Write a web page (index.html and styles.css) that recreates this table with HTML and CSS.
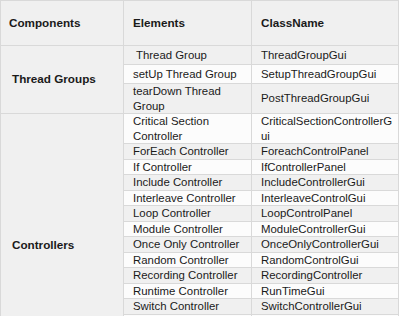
FILE: index.html
```html
<!DOCTYPE html>
<html>
<head>
<meta charset="utf-8">
<link rel="stylesheet" href="styles.css">
</head>
<body>
<table class="grid">
  <colgroup>
    <col class="c1">
    <col class="c2">
    <col class="c3">
  </colgroup>
  <thead>
    <tr class="head">
      <th class="comp">Components</th>
      <th>Elements</th>
      <th>ClassName</th>
    </tr>
  </thead>
  <tbody>
    <tr class="tg odd">
      <td class="group" rowspan="3">Thread Groups</td>
      <td class="indent">Thread Group</td>
      <td>ThreadGroupGui</td>
    </tr>
    <tr class="tg even">
      <td>setUp Thread Group</td>
      <td>SetupThreadGroupGui</td>
    </tr>
    <tr class="odd">
      <td>tearDown Thread Group</td>
      <td>PostThreadGroupGui</td>
    </tr>
    <tr class="even">
      <td class="group" rowspan="16">Controllers</td>
      <td>Critical Section Controller</td>
      <td class="wrap">CriticalSectionControllerGui</td>
    </tr>
    <tr class="odd"><td>ForEach Controller</td><td>ForeachControlPanel</td></tr>
    <tr class="even"><td>If Controller</td><td>IfControllerPanel</td></tr>
    <tr class="odd"><td>Include Controller</td><td>IncludeControllerGui</td></tr>
    <tr class="even"><td>Interleave Controller</td><td>InterleaveControlGui</td></tr>
    <tr class="odd"><td>Loop Controller</td><td>LoopControlPanel</td></tr>
    <tr class="even"><td>Module Controller</td><td>ModuleControllerGui</td></tr>
    <tr class="odd"><td>Once Only Controller</td><td>OnceOnlyControllerGui</td></tr>
    <tr class="even"><td>Random Controller</td><td>RandomControlGui</td></tr>
    <tr class="odd"><td>Recording Controller</td><td>RecordingController</td></tr>
    <tr class="even"><td>Runtime Controller</td><td>RunTimeGui</td></tr>
    <tr class="odd"><td>Switch Controller</td><td>SwitchControllerGui</td></tr>
    <tr class="even"><td>Throughput Controller</td><td>ThroughputControllerGui</td></tr>
    <tr class="odd"><td>Transaction Controller</td><td>TransactionControllerGui</td></tr>
    <tr class="even"><td>While Controller</td><td>WhileControllerGui</td></tr>
    <tr class="odd"><td>Simple Controller</td><td>LogicControllerGui</td></tr>
  </tbody>
</table>
</body>
</html>
```

FILE: styles.css
```css
html, body {
  margin: 0;
  padding: 0;
  background: #ffffff;
  overflow: hidden;
}

.grid {
  border-collapse: collapse;
  table-layout: fixed;
  width: 398px;
  font-family: "Liberation Sans", Arial, sans-serif;
  font-size: 11.4px;
  color: #1a1a1a;
}

.c1 { width: 123px; }
.c2 { width: 128px; }
.c3 { width: 147px; }

.grid th,
.grid td {
  border: 1px solid #d9d9d9;
  text-align: left;
  vertical-align: middle;
  line-height: 14.5px;
  padding: 0 4px 0 9px;
}

.grid th {
  font-weight: bold;
  font-size: 11.7px;
  background: #f0f0f0;
  height: 44px;
}

.grid th.comp {
  padding-left: 8px;
}

.grid td.group {
  background: #f0f0f0;
  font-weight: bold;
  font-size: 11.7px;
  padding-left: 11px;
}

.odd td { background: #f0f0f0; }
.even td { background: #fcfcfc; }

.tg td {
  height: 18px;
}

.indent {
  padding-left: 12px !important;
}

.wrap {
  overflow-wrap: anywhere;
  word-break: break-all;
}
```
